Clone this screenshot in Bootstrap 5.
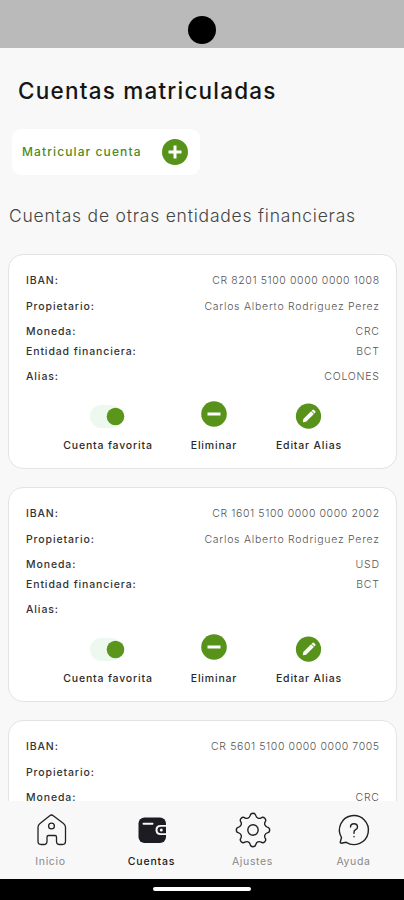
<!DOCTYPE html>
<html lang="es">
<head>
<meta charset="utf-8">
<meta name="viewport" content="width=device-width, initial-scale=1">
<title>Cuentas matriculadas</title>
<link href="https://cdn.jsdelivr.net/npm/bootstrap@5.3.0/dist/css/bootstrap.min.css" rel="stylesheet">
<style>
body{font-family:Inter,"Liberation Sans",sans-serif;background:#f8f8f8;color:#1d1d1f;height:900px}
.status-strip{height:48px;background:#bababa;padding-top:16px}
.camera{width:28px;height:28px;background:#000}
.page-title{font-size:22.5px;line-height:28px;font-weight:500;letter-spacing:1.22px;margin:29px 0 0 18px;color:#151515}
.enroll{width:188px;height:46px;margin:24px 0 0 12px;padding:0 12px 0 10px;background:#fff;border-radius:9px;color:#4f8a1c;font-size:12px;font-weight:500;letter-spacing:1.1px;border:0}
.section-title{font-size:17.5px;line-height:24px;font-weight:300;letter-spacing:.78px;margin:29px 0 26px 9px;color:#444}
.account{height:215px;margin:0 7px 18px 8px;border:1px solid #e3e3e3;border-radius:15px;padding:18px 17px 0;flex:none}
.field{height:16px;line-height:16px;font-size:10.5px;margin-bottom:9.5px;color:#333;font-weight:500;letter-spacing:.88px}
.field.tight{margin-bottom:3.5px}
.field .val{font-weight:300;color:#555;letter-spacing:.75px;margin-right:-.7px}
.field .iban{letter-spacing:.6px}
.actions{gap:36px;padding-left:37px;margin-top:4px}
.act{font-size:10.5px;font-weight:500;letter-spacing:.82px;color:#2a2a2a;line-height:14px;white-space:nowrap}
.act svg{display:block;height:40px;width:40px;margin-bottom:4px;overflow:visible}
.w-fav{width:90px}.w-del{width:50px}.w-edit{width:68px}
.tabs{height:78px;background:#f8f8f8}
.tab{width:101px;font-size:10.5px;line-height:14px;color:#888;letter-spacing:.65px;padding-top:9px}
.tab svg{width:40px;height:40px;margin-bottom:5px}
.tab.current{color:#1b1b1f;font-weight:500;letter-spacing:.8px}
.home-strip{height:21px;background:#000;padding-top:8px}
.home-bar{width:98px;height:4px;background:#fff;border-radius:2px}
</style>
</head>
<body class="d-flex flex-column overflow-hidden">
<svg class="d-none">
<symbol id="toggle" viewBox="0 0 40 40"><rect x="2" y="10" width="32" height="23" rx="11.5" fill="#edf8ef"/><circle cx="27.5" cy="21.5" r="8.8" fill="#5a951c"/></symbol>
<symbol id="minus" viewBox="0 0 40 40"><circle cx="20" cy="19" r="12.8" fill="#57931a"/><path d="M13.5 19h13" stroke="#fff" stroke-width="3"/></symbol>
<symbol id="pencil" viewBox="0 0 40 40"><circle cx="19.500" cy="21.2" r="12.6" fill="#57931a"/><path d="M13.800 27.200l.5-3.200 7.800-7.800 2.800 2.800-7.800 7.800zM22.600 15.700l.8-.8q.8-.7 1.600 0l1.200 1.200q.7.8 0 1.600l-.8.8z" fill="#fff"/></symbol>
</svg>
<header class="status-strip d-flex justify-content-center flex-shrink-0"><div class="camera rounded-circle"></div></header>
<main class="flex-grow-1 overflow-hidden d-flex flex-column">
<h1 class="page-title">Cuentas matriculadas</h1>
<button class="enroll d-flex align-items-center justify-content-between flex-shrink-0"><span>Matricular cuenta</span>
<svg width="26" height="26" viewBox="0 0 26 26"><circle cx="13" cy="13" r="13" fill="#57931a"/><path d="M6.5 13h13M13 6.5v13" stroke="#fff" stroke-width="3"/></svg></button>
<h2 class="section-title">Cuentas de otras entidades financieras</h2>

<section class="account bg-white">
<div class="field d-flex justify-content-between"><span>IBAN:</span><span class="val iban">CR 8201 5100 0000 0000 1008</span></div>
<div class="field d-flex justify-content-between"><span>Propietario:</span><span class="val">Carlos Alberto Rodriguez Perez</span></div>
<div class="field tight d-flex justify-content-between"><span>Moneda:</span><span class="val">CRC</span></div>
<div class="field d-flex justify-content-between"><span>Entidad financiera:</span><span class="val">BCT</span></div>
<div class="field d-flex justify-content-between"><span>Alias:</span><span class="val">COLONES</span></div>
<div class="actions d-flex">
<div class="act w-fav d-flex flex-column align-items-center"><svg><use href="#toggle"/></svg>Cuenta favorita</div>
<div class="act w-del d-flex flex-column align-items-center"><svg><use href="#minus"/></svg>Eliminar</div>
<div class="act w-edit d-flex flex-column align-items-center"><svg><use href="#pencil"/></svg>Editar Alias</div>
</div>
</section>

<section class="account bg-white">
<div class="field d-flex justify-content-between"><span>IBAN:</span><span class="val iban">CR 1601 5100 0000 0000 2002</span></div>
<div class="field d-flex justify-content-between"><span>Propietario:</span><span class="val">Carlos Alberto Rodriguez Perez</span></div>
<div class="field tight d-flex justify-content-between"><span>Moneda:</span><span class="val">USD</span></div>
<div class="field d-flex justify-content-between"><span>Entidad financiera:</span><span class="val">BCT</span></div>
<div class="field d-flex justify-content-between"><span>Alias:</span></div>
<div class="actions d-flex">
<div class="act w-fav d-flex flex-column align-items-center"><svg><use href="#toggle"/></svg>Cuenta favorita</div>
<div class="act w-del d-flex flex-column align-items-center"><svg><use href="#minus"/></svg>Eliminar</div>
<div class="act w-edit d-flex flex-column align-items-center"><svg><use href="#pencil"/></svg>Editar Alias</div>
</div>
</section>

<section class="account bg-white">
<div class="field d-flex justify-content-between"><span>IBAN:</span><span class="val iban">CR 5601 5100 0000 0000 7005</span></div>
<div class="field d-flex justify-content-between"><span>Propietario:</span></div>
<div class="field tight d-flex justify-content-between"><span>Moneda:</span><span class="val">CRC</span></div>
</section>
</main>
<nav class="tabs d-flex flex-shrink-0">
<div class="tab d-flex flex-column align-items-center"><svg viewBox="0 0 40 40" fill="none" stroke="#222" stroke-width="1.3"><path d="M20.500 5q1 0 1.800.7l10.200 7.800q2 1.600 2 3.800v14q0 3.200-3.200 3.200h-2.500q-3.300 0-3.300-3.300v-4.200q0-1.500-1.500-1.500h-6.500q-1.500 0-1.500 1.500v4.200q0 3.300-3.300 3.300h-2.500q-3.200 0-3.200-3.200v-14q0-2.200 2-3.800l9.700-7.800q.8-.7 1.800-.7z"/><circle cx="20.500" cy="16" r="2.900"/></svg>Inicio</div>
<div class="tab current d-flex flex-column align-items-center"><svg viewBox="0 0 40 40"><rect x="6.500" y="7.500" width="27.500" height="25.500" rx="6" fill="#1c1c22"/><path d="M11.500 13.700h9" stroke="#f8f8f8" stroke-width="2" stroke-linecap="round"/><path d="M36 15h-7.500q-5 0-5 5t5 5H36z" fill="#f8f8f8"/><path d="M34 16.800h-5q-3.500 0-3.500 3.200t3.500 3.300h5z" fill="#1c1c22"/><circle cx="29.300" cy="20" r="1.500" fill="#f8f8f8"/></svg>Cuentas</div>
<div class="tab d-flex flex-column align-items-center"><svg viewBox="0 0 40 40" fill="none" stroke="#222" stroke-width="1.4" stroke-linejoin="round"><path d="M17.150 5.680A2.900 2.900 0 0 1 22.850 5.680A3.600 3.600 0 0 0 28.110 7.860A2.900 2.900 0 0 1 32.140 11.890A3.600 3.600 0 0 0 34.320 17.150A2.900 2.900 0 0 1 34.320 22.850A3.600 3.600 0 0 0 32.140 28.110A2.900 2.900 0 0 1 28.110 32.140A3.600 3.600 0 0 0 22.850 34.320A2.900 2.900 0 0 1 17.150 34.320A3.600 3.600 0 0 0 11.890 32.140A2.900 2.900 0 0 1 7.860 28.110A3.600 3.600 0 0 0 5.680 22.850A2.900 2.900 0 0 1 5.680 17.150A3.600 3.600 0 0 0 7.860 11.890A2.900 2.900 0 0 1 11.890 7.860A3.600 3.600 0 0 0 17.150 5.680Z"/><circle cx="20" cy="20" r="5.200"/></svg>Ajustes</div>
<div class="tab d-flex flex-column align-items-center"><svg viewBox="0 0 40 40" fill="none" stroke="#222" stroke-width="1.400" stroke-linecap="round"><path d="M7.500 27.500A14.500 14.500 0 1 1 12.200 32.300L7.300 33.200Q5.800 33 6.400 31.500Z" stroke-linejoin="round"/><path d="M16.500 17q0-3.300 3.500-3.300t3.500 3.200q0 1.700-1.900 2.800T20 22.700v.6M20 26.500v.3"/></svg>Ayuda</div>
</nav>
<footer class="home-strip d-flex justify-content-center flex-shrink-0"><div class="home-bar"></div></footer>
<script src="https://cdn.jsdelivr.net/npm/bootstrap@5.3.0/dist/js/bootstrap.bundle.min.js"></script>
</body>
</html>
